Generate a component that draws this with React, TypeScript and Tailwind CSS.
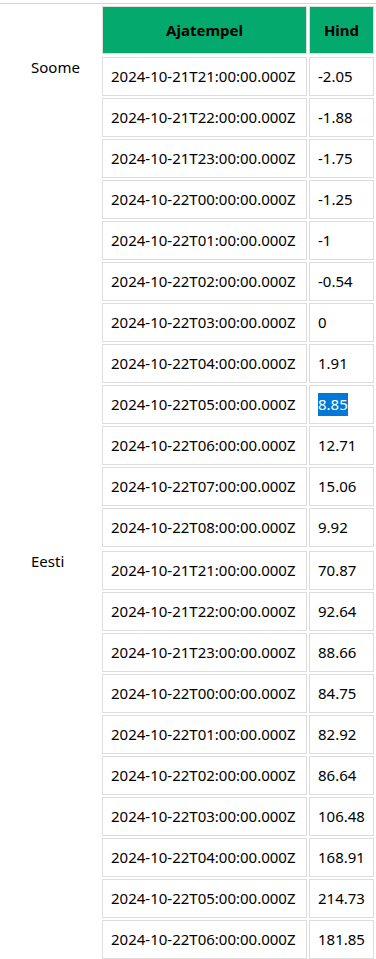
const groups: { name: string; rows: [string, string][] }[] = [
  {
    name: 'Soome',
    rows: [
      ['2024-10-21T21:00:00.000Z', '-2.05'],
      ['2024-10-21T22:00:00.000Z', '-1.88'],
      ['2024-10-21T23:00:00.000Z', '-1.75'],
      ['2024-10-22T00:00:00.000Z', '-1.25'],
      ['2024-10-22T01:00:00.000Z', '-1'],
      ['2024-10-22T02:00:00.000Z', '-0.54'],
      ['2024-10-22T03:00:00.000Z', '0'],
      ['2024-10-22T04:00:00.000Z', '1.91'],
      ['2024-10-22T05:00:00.000Z', '8.85'],
      ['2024-10-22T06:00:00.000Z', '12.71'],
      ['2024-10-22T07:00:00.000Z', '15.06'],
      ['2024-10-22T08:00:00.000Z', '9.92'],
    ],
  },
  {
    name: 'Eesti',
    rows: [
      ['2024-10-21T21:00:00.000Z', '70.87'],
      ['2024-10-21T22:00:00.000Z', '92.64'],
      ['2024-10-21T23:00:00.000Z', '88.66'],
      ['2024-10-22T00:00:00.000Z', '84.75'],
      ['2024-10-22T01:00:00.000Z', '82.92'],
      ['2024-10-22T02:00:00.000Z', '86.64'],
      ['2024-10-22T03:00:00.000Z', '106.48'],
      ['2024-10-22T04:00:00.000Z', '168.91'],
      ['2024-10-22T05:00:00.000Z', '214.73'],
      ['2024-10-22T06:00:00.000Z', '181.85'],
    ],
  },
];

function Row({ time, price, selected }: { time: string; price: string; selected?: boolean }) {
  return (
    <div className="flex gap-[2px]">
      <div className="flex h-[39px] w-[205px] items-center border border-[#ddd] pl-[8px]">{time}</div>
      <div className="flex h-[39px] w-[65px] items-center border border-[#ddd] pl-[8px]">
        {selected ? <span className="bg-[#0078d7] text-white">{price}</span> : price}
      </div>
    </div>
  );
}

export default function App() {
  return (
    <div
      className="min-h-screen overflow-hidden bg-white pt-[3px] text-[15px] text-black"
      style={{ fontFamily: '"Noto Sans", "Open Sans", sans-serif' }}
    >
      <div className="border-t border-[#d4d4d4] pt-[2px]">
        {/* päis */}
        <div className="flex gap-[2px] pl-[102px]">
          <div className="flex h-[48px] w-[205px] items-center justify-center border border-[#ddd] bg-[#04AA6D] font-bold">
            Ajatempel
          </div>
          <div className="flex h-[48px] w-[65px] items-center justify-center border border-[#ddd] bg-[#04AA6D] font-bold">
            Hind
          </div>
        </div>

        <div className="mt-[3px] flex flex-col gap-[4px]">
          {groups.map((g) => (
            <div key={g.name} className="flex">
              <div className="w-[102px] pl-[31px] leading-[20px]">{g.name}</div>
              <div className="flex flex-col gap-[2px]">
                {g.rows.map(([t, p]) => (
                  <Row key={g.name + t} time={t} price={p} selected={g.name === 'Soome' && p === '8.85'} />
                ))}
              </div>
            </div>
          ))}
        </div>
      </div>
    </div>
  );
}
